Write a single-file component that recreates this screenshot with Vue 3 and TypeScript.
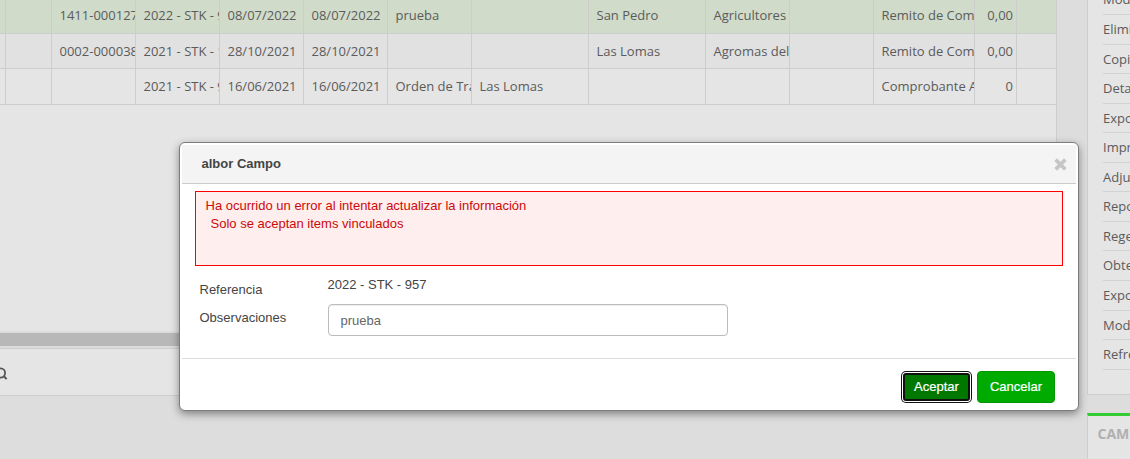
<script setup lang="ts">
import { ref } from 'vue'

interface Column {
  width: number
  align?: 'right'
}

interface MenuItem {
  label: string
  height: number
}

const columns: Column[] = [
  { width: 6 },
  { width: 46 },
  { width: 84 },
  { width: 84 },
  { width: 84 },
  { width: 84 },
  { width: 84 },
  { width: 117 },
  { width: 117 },
  { width: 84 },
  { width: 84 },
  { width: 101 },
  { width: 42, align: 'right' },
  { width: 40 },
]

const rows: string[][] = [
  ['', '', '1411-00012754', '2022 - STK - 957', '08/07/2022', '08/07/2022', 'prueba', '', 'San Pedro', 'Agricultores', '', 'Remito de Compra', '0,00', ''],
  ['', '', '0002-00003812', '2021 - STK - 1024', '28/10/2021', '28/10/2021', '', '', 'Las Lomas', 'Agromas del Sur', '', 'Remito de Compra', '0,00', ''],
  ['', '', '', '2021 - STK - 913', '16/06/2021', '16/06/2021', 'Orden de Trabajo', 'Las Lomas', '', '', '', 'Comprobante Ajuste', '0', ''],
]

const menu: MenuItem[] = [
  { label: 'Modificar', height: 30 },
  { label: 'Eliminar', height: 30 },
  { label: 'Copiar', height: 29 },
  { label: 'Detalle', height: 30 },
  { label: 'Exportar', height: 29 },
  { label: 'Imprimir', height: 30 },
  { label: 'Adjuntar', height: 29 },
  { label: 'Reporte', height: 30 },
  { label: 'Regenerar', height: 29 },
  { label: 'Obtener', height: 30 },
  { label: 'Exportar', height: 30 },
  { label: 'Modificar', height: 29 },
  { label: 'Refrescar', height: 30 },
]

const observaciones = ref('prueba')
</script>

<template>
  <div class="page">
    <main class="grid-panel">
      <div class="grid">
        <div v-for="(row, r) in rows" :key="r" class="row" :class="'row-' + r">
          <div
            v-for="(col, c) in columns"
            :key="c"
            class="cell"
            :class="col.align"
            :style="{ width: col.width + 'px' }"
          >{{ row[c] }}</div>
        </div>
      </div>
      <div class="scrollbar"><div class="thumb"></div></div>
      <div class="pager">
        <svg width="8" height="14" viewBox="0 0 8 14" fill="none" stroke="#555" stroke-width="1.8">
          <circle cx="0.5" cy="6" r="4.6" />
          <path d="M3.6 8.9L6.6 12.1" stroke-width="2.1" />
        </svg>
      </div>
    </main>

    <aside class="sidebar">
      <ul class="menu">
        <li v-for="(item, i) in menu" :key="i" :style="{ height: item.height + 'px' }">{{ item.label }}</li>
      </ul>
      <section class="side-box">
        <h3>CAMPOS</h3>
      </section>
    </aside>

    <div class="modal" role="dialog">
      <header class="modal-header">
        <span>albor Campo</span>
        <button class="close" aria-label="Cerrar">
          <svg width="13" height="13" viewBox="0 0 13 13" stroke="#c6c6c6" stroke-width="3.8" stroke-linecap="square">
            <path d="M3 3L10 10M10 3L3 10" />
          </svg>
        </button>
      </header>
      <div class="modal-body">
        <div class="error">
          <p>Ha ocurrido un error al intentar actualizar la información</p>
          <p class="detail">Solo se aceptan items vinculados</p>
        </div>
        <div class="field reference">
          <label>Referencia</label>
          <span>2022 - STK - 957</span>
        </div>
        <div class="field">
          <label>Observaciones</label>
          <input v-model="observaciones" type="text">
        </div>
      </div>
      <footer class="modal-footer">
        <button class="btn active">Aceptar</button>
        <button class="btn">Cancelar</button>
      </footer>
    </div>
  </div>
</template>

<style>
body {
  margin: 0;
  overflow: hidden;
}
</style>

<style scoped>
* {
  box-sizing: border-box;
}

.page {
  position: relative;
  display: flex;
  gap: 30px;
  width: 1130px;
  height: 459px;
  overflow: hidden;
  background: #ddd;
  color: #5b5b5b;
  font: 13px 'Open Sans', sans-serif;
}

.grid-panel {
  display: flex;
  flex-direction: column;
  flex: none;
  width: 1057px;
  height: 396px;
  background: #e5e5e5;
  border-right: 1px solid #cdcdcd;
  border-bottom: 1px solid #cdcdcd;
}

.grid {
  flex: none;
  width: 1057px;
  height: 331px;
}

.row {
  display: flex;
  height: 35px;
  line-height: 34px;
  border-bottom: 1px solid #cdcdcd;
}

.row-0 {
  height: 34px;
  line-height: 31px;
  background: #d0dbca;
}

.row-1 {
  background: #e1e1e1;
}

.row-2 {
  height: 36px;
}

.cell {
  flex: none;
  padding-left: 7.5px;
  overflow: hidden;
  white-space: nowrap;
  border-right: 1px solid #cdcdcd;
}

.cell:first-child {
  padding: 0;
}

.cell.right {
  padding: 0 3px 0 0;
  text-align: right;
}

.scrollbar {
  flex: none;
  height: 17px;
  padding: 2px 0;
  background: #dcdcdc;
}

.thumb {
  height: 13px;
  background: #b8b8b8;
}

.pager {
  display: flex;
  flex: 1;
  align-items: center;
  padding-top: 3px;
  border-top: 1px solid #cdcdcd;
}

.sidebar {
  display: flex;
  flex-direction: column;
  flex: none;
  gap: 18px;
  width: 43px;
}

.menu {
  height: 395px;
  margin: 0;
  padding: 0 0 0 15px;
  overflow: hidden;
  list-style: none;
  background: #e5e5e5;
  border-left: 1px solid #cdcdcd;
  border-bottom: 1px solid #cdcdcd;
}

.menu li {
  overflow: hidden;
  line-height: 29px;
  white-space: nowrap;
  border-bottom: 1px solid #d2d2d2;
}

.menu li:first-child {
  margin-top: -15px;
}

.side-box {
  flex: 1;
  padding-left: 9.5px;
  overflow: hidden;
  background: #e5e5e5;
  border-top: 3px solid #3c3;
  border-left: 1px solid #cdcdcd;
}

.side-box h3 {
  margin: 0;
  color: #b0b0b0;
  font-size: 14px;
  font-weight: 700;
  line-height: 36px;
}

.modal {
  position: absolute;
  top: 142px;
  left: 179px;
  display: flex;
  flex-direction: column;
  width: 900px;
  height: 269px;
  padding: 2px;
  color: #444;
  font: 13px 'Liberation Sans', Arial, sans-serif;
  background: #fff;
  border: 1px solid #7c7c7c;
  border-radius: 6px;
  box-shadow: 0 3px 9px rgba(0, 0, 0, 0.42);
}

.modal-header {
  display: flex;
  justify-content: space-between;
  flex: none;
  height: 39px;
  padding: 0 9px 0 19.5px;
  font-weight: 700;
  line-height: 37px;
  background: #f4f4f4;
  border-bottom: 1px solid #ccc;
}

.close {
  display: flex;
  align-items: center;
  padding: 0;
  background: none;
  border: 0;
}

.modal-body {
  flex: 1;
  padding: 7px 13px 0;
}

.error {
  height: 75px;
  padding: 5px 9.5px;
  color: #cd0a0a;
  line-height: 18px;
  background: #fee;
  border: 1px solid #f00;
}

.error p {
  margin: 0;
}

.error .detail {
  padding-left: 5px;
}

.field {
  display: flex;
  padding-left: 4.5px;
}

.field label {
  flex: none;
  width: 128px;
  line-height: 28px;
}

.field input {
  width: 400px;
  height: 32px;
  margin-left: 0.5px;
  padding: 0 11.5px;
  color: #666;
  font: inherit;
  background: #fff;
  border: 1px solid #bbb;
  border-radius: 4px;
  outline: none;
  box-shadow: inset 0 1px 1px rgba(0, 0, 0, 0.07);
}

.reference {
  height: 38px;
  padding-top: 10px;
}

.reference span {
  line-height: 17px;
}

.modal-footer {
  display: flex;
  justify-content: flex-end;
  flex: none;
  gap: 6px;
  height: 50px;
  padding: 12px 21px 0 0;
  border-top: 1px solid #ddd;
}

.btn {
  width: 78px;
  height: 32px;
  padding: 0 0 2px;
  color: #fff;
  font: 13px 'Liberation Sans', Arial, sans-serif;
  background: #00ab00;
  border: 1px solid #009700;
  border-radius: 4px;
  -webkit-text-stroke: 0.2px #fff;
}

.btn.active {
  width: 67px;
  height: 28px;
  margin: 2px 1px 2px 2px;
  background: #007800;
  border: 2px solid #101010;
  border-radius: 3px;
  box-shadow: 0 0 0 1px #fff, 0 0 0 2px #101010;
}
</style>
